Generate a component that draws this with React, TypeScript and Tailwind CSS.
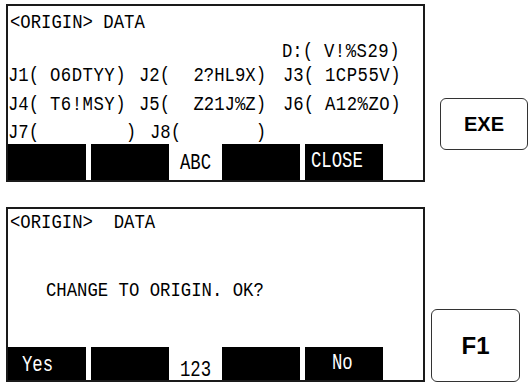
const mono = "font-['Liberation_Mono','DejaVu_Sans_Mono',monospace] text-[17.3px] text-black";

function Line({ className, children }: { className?: string; children: React.ReactNode }) {
  return (
    <div className={className}>
      <div className="h-[28px] leading-[28px] scale-y-[1.18] whitespace-pre flex">{children}</div>
    </div>
  );
}

function Cell({ w, label, value, track }: { w: string; label: string; value: string; track?: string }) {
  return (
    <div className={`flex justify-between ${w}`}>
      <span>{label}</span>
      <span className={track}>{value}</span>
    </div>
  );
}

function Label({ className, children }: { className?: string; children: React.ReactNode }) {
  return (
    <div className={className}>
      <div className="h-[28px] leading-[28px] scale-y-[1.28] whitespace-pre">{children}</div>
    </div>
  );
}

function Key({ children, className }: { children: React.ReactNode; className: string }) {
  return (
    <div
      className={`flex items-center justify-center rounded-[6px] border border-[#333] bg-white font-['Liberation_Sans',Arial,sans-serif] font-bold text-black ${className}`}
    >
      {children}
    </div>
  );
}

export default function App() {
  return (
    <div className={`w-[528px] h-[383px] bg-white overflow-hidden ${mono}`}>
      {/* data screen */}
      <div className="flex items-start">
        <div className="ml-[6px] mt-[4px] w-[419px] h-[178px] border-2 border-[#1a1a1a] flex flex-col">
          <div className="pt-[3px] flex-1">
            <Line className="h-[29px] pl-[2px]">{"<ORIGIN> DATA"}</Line>
            <Line className="h-[24px]">
              <div className="ml-[274px]">
                <Cell w="w-[118px]" label="D:(" value="V!%S29)" track="tracking-[0.5px]" />
              </div>
            </Line>
            <Line className="h-[29px]">
              <Cell w="w-[118px]" label="J1(" value="O6DTYY)" track="tracking-[0.5px]" />
              <div className="ml-[13px]">
                <Cell w="w-[127px]" label="J2(" value="2?HL9X)" />
              </div>
              <div className="ml-[17px]">
                <Cell w="w-[118px]" label="J3(" value="1CP55V)" track="tracking-[0.5px]" />
              </div>
            </Line>
            <Line className="h-[28px]">
              <Cell w="w-[118px]" label="J4(" value="T6!MSY)" track="tracking-[0.5px]" />
              <div className="ml-[13px]">
                <Cell w="w-[127px]" label="J5(" value="Z21J%Z)" />
              </div>
              <div className="ml-[17px]">
                <Cell w="w-[118px]" label="J6(" value="A12%ZO)" track="tracking-[0.5px]" />
              </div>
            </Line>
            <Line className="h-[25px]">
              <Cell w="w-[128px]" label="J7(" value=")" />
              <div className="ml-[14px]">
                <Cell w="w-[116px]" label="J8(" value=")" />
              </div>
            </Line>
          </div>
          <div className="flex h-[36px] shrink-0">
            <div className="w-[78px] bg-black" />
            <div className="w-[5px]" />
            <div className="w-[78px] bg-black" />
            <Label className="w-[53px] pt-[6px] text-center">ABC</Label>
            <div className="w-[78px] bg-black" />
            <div className="w-[5px]" />
            <Label className="w-[78px] bg-black text-white pt-[4px] pl-[6px]">CLOSE</Label>
          </div>
        </div>
        <Key className="ml-[15px] mt-[98px] w-[88px] h-[52px] text-[20px]">EXE</Key>
      </div>

      {/* confirm screen */}
      <div className="flex items-start mt-[25px]">
        <div className="ml-[6px] w-[419px] h-[175px] border-2 border-[#1a1a1a] flex flex-col">
          <div className="flex-1">
            <Line className="h-[68px] pl-[2px]">{"<ORIGIN>  DATA"}</Line>
            <Line className="pl-[38px]">{"CHANGE TO ORIGIN. OK?"}</Line>
          </div>
          <div className="flex h-[33px] shrink-0">
            <Label className="w-[78px] bg-black text-white pt-[5px] pl-[14px]">Yes</Label>
            <div className="w-[5px]" />
            <div className="w-[78px] bg-black" />
            <Label className="w-[53px] h-[33px] pt-[10px] text-center">123</Label>
            <div className="w-[78px] bg-black" />
            <div className="w-[5px]" />
            <Label className="w-[78px] bg-black text-white pt-[3px] pl-[27px]">No</Label>
          </div>
        </div>
        <Key className="ml-[6px] mt-[102px] w-[89px] h-[73px] text-[24px]">F1</Key>
      </div>
    </div>
  );
}
